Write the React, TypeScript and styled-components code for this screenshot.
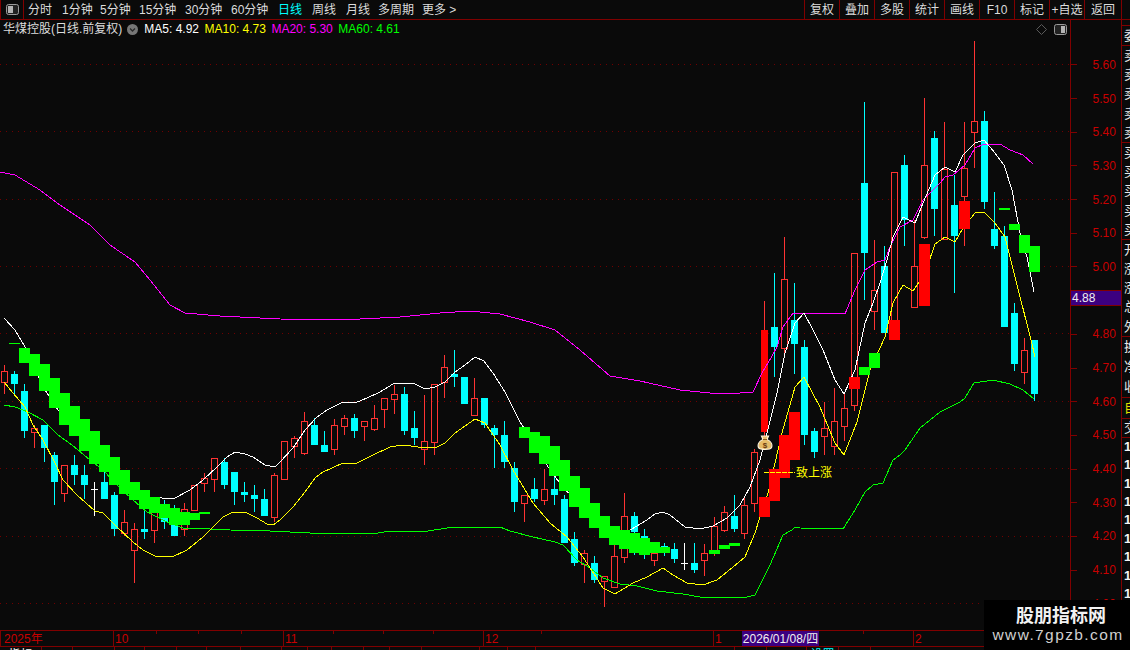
import React from "react";
import styled, { createGlobalStyle } from "styled-components";

const DARK = "#800000";
const AXIS_TEXT = "#c80000";
const SANS = `"Liberation Sans", "Noto Sans CJK SC", sans-serif`;

const Global = createGlobalStyle`
  html, body { margin: 0; padding: 0; background: #0a0a0a; overflow: hidden; }
`;

const Page = styled.div`
  width: 1130px;
  height: 650px;
  position: relative;
  overflow: hidden;
  background: #0a0a0a;
  font: 12px/1 ${SANS};
  color: #dcdcdc;
`;

const TopBar = styled.div`
  height: 20px;
  box-sizing: border-box;
  border-bottom: 1px solid ${DARK};
  display: flex;
  align-items: stretch;
  padding-right: 8px;
`;

const IconCell = styled.div`
  width: 24px;
  box-sizing: border-box;
  border: 1px solid ${DARK};
  border-top: none;
  border-bottom: none;
  display: flex;
  align-items: center;
  justify-content: center;
`;

const Periods = styled.div`
  display: flex;
  align-items: center;
  padding-left: 4px;
`;

const Period = styled.span<{ $active?: boolean; $w: number }>`
  width: ${(p) => p.$w}px;
  color: ${(p) => (p.$active ? "#00ffff" : "#dcdcdc")};
  white-space: nowrap;
`;

const Tools = styled.div`
  margin-left: auto;
  display: flex;
`;

const Tool = styled.div<{ $w?: number; $last?: boolean }>`
  width: ${(p) => p.$w ?? 35}px;
  box-sizing: border-box;
  border-left: 1px solid ${DARK};
  border-right: ${(p) => (p.$last ? `1px solid ${DARK}` : "none")};
  display: flex;
  align-items: center;
  justify-content: center;
  white-space: nowrap;
`;

const MainRow = styled.div`
  display: flex;
  height: 610px;
`;

const ChartColumn = styled.div`
  width: 1070px;
  display: flex;
  flex-direction: column;
`;

const Legend = styled.div`
  height: 18px;
  display: flex;
  align-items: center;
  padding: 0 3px 0 3px;
`;

const Title = styled.span`
  color: #dcdcdc;
  white-space: nowrap;
`;

const Chevron = styled.svg`
  margin: 0 6px 0 5px;
`;

const MaValue = styled.span<{ $c: string }>`
  color: ${(p) => p.$c};
  margin-right: 5.5px;
  white-space: nowrap;
`;

const LegendIcons = styled.div`
  margin-left: auto;
  display: flex;
  align-items: center;
  gap: 7px;
`;

const ChartSvg = styled.svg`
  display: block;
  width: 1070px;
  height: 592px;
`;

const AxisColumn = styled.div`
  width: 51px;
  box-sizing: border-box;
  border-left: 1px solid ${DARK};
  padding-top: 28px;
  position: relative;
`;

const AxisRow = styled.div`
  height: 33.7px;
  display: flex;
  align-items: center;
  color: ${AXIS_TEXT};
`;

const AxisTick = styled.i`
  width: 6px;
  height: 1px;
  background: ${DARK};
  margin-right: 15.5px;
`;

const PriceTag = styled.div`
  position: absolute;
  left: 0;
  right: 0;
  top: 270px;
  height: 16px;
  box-sizing: border-box;
  background: #3c0080;
  border-top: 1px solid ${DARK};
  border-bottom: 1px solid ${DARK};
  color: #f0f0f0;
  display: flex;
  align-items: center;
  padding-left: 1px;
`;

const SideColumn = styled.div`
  flex: 1;
  box-sizing: border-box;
  border-left: 1px solid ${DARK};
  padding-top: 5px;
  overflow: hidden;
`;

const SideGroup = styled.div`
  border-top: 1px solid ${DARK};
`;

const SideRow = styled.div<{ $h?: number; $c?: string }>`
  height: ${(p) => p.$h ?? 19.2}px;
  padding-left: 2px;
  font-size: 13px;
  line-height: ${(p) => p.$h ?? 19.2}px;
  color: ${(p) => p.$c ?? "#e8e8e8"};
  white-space: nowrap;
  overflow: hidden;
`;

const OneRow = styled(SideRow)`
  font-weight: 700;
  color: #f4f4f4;
`;

const DateBar = styled.div`
  height: 16px;
  box-sizing: border-box;
  border-top: 1px solid ${DARK};
  display: flex;
  position: relative;
`;

const DateSegment = styled.div<{ $w: number; $first?: boolean }>`
  width: ${(p) => p.$w}px;
  box-sizing: border-box;
  border-left: 1px solid ${DARK};
  padding-left: ${(p) => (p.$first ? 3 : 1)}px;
  color: ${AXIS_TEXT};
  display: flex;
  align-items: center;
  font-size: 12px;
  white-space: nowrap;
`;

const MinorTick = styled.i<{ $x: number }>`
  position: absolute;
  left: ${(p) => p.$x}px;
  top: 0;
  width: 1px;
  height: 3px;
  background: ${DARK};
`;

const DateCursor = styled.div`
  position: absolute;
  left: 742px;
  top: 0;
  width: 77px;
  height: 15px;
  background: #3c0080;
  color: #f0f0f0;
  display: flex;
  align-items: center;
  justify-content: center;
  white-space: nowrap;
`;

const TabRow = styled.div`
  height: 4px;
  border-top: 1px solid ${DARK};
  display: flex;
  overflow: hidden;
`;

const Tab = styled.div<{ $w: number; $c?: string }>`
  width: ${(p) => p.$w}px;
  flex: none;
  box-sizing: border-box;
  border-right: 1px solid ${DARK};
  color: ${(p) => p.$c ?? "#fff"};
  text-align: center;
  padding-top: 1px;
  line-height: 14px;
`;

const Watermark = styled.div`
  position: absolute;
  right: 0;
  bottom: 0;
  width: 146px;
  height: 50px;
  background: #000;
  display: flex;
  flex-direction: column;
  align-items: center;
  padding-top: 3px;
  box-sizing: border-box;
`;

const WatermarkTitle = styled.div`
  font: 700 18px/22px "Noto Sans CJK SC", sans-serif;
  color: #f2f2f2;
  margin-left: 8px;
`;

const WatermarkUrl = styled.div`
  font: 400 15.5px/20px "Liberation Sans", sans-serif;
  letter-spacing: 1.4px;
  color: #d0d0d0;
  margin-left: 2px;
`;

type C = [string, number, number, number, number];
const candles: C[] = [
  ["r",365,371,382,394],["c",371,374,384,394],["c",384,391,431,438],["r",425,428,432,448],["c",425,425,448,462],
  ["c",452,455,482,505],["r",465,465,493,502],["c",455,465,475,485],["c",465,475,485,499],["w",482,489,489,516],
  ["c",472,482,499,499],["c",492,495,529,536],["r",510,522,533,536],["r",523,529,550,583],["c",509,529,532,539],
  ["r",510,510,530,543],["c",500,515,522,529],["c",505,523,536,536],["r",503,509,529,536],["r",485,485,510,510],
  ["r",473,478,483,492],["r",458,458,479,492],["c",458,462,485,489],["c",472,472,492,505],["c",482,492,495,502],
  ["c",485,495,499,512],["c",489,499,516,516],["r",473,475,517,522],["r",441,441,479,479],["r",436,438,446,458],
  ["r",412,421,453,455],["c",418,425,445,445],["c",431,445,452,452],["r",419,425,449,455],["r",415,418,426,435],
  ["c",414,418,431,438],["r",421,421,426,441],["r",405,418,429,431],["r",398,398,409,428],["r",385,394,399,414],
  ["c",387,394,431,435],["c",411,428,438,445],["r",395,441,449,465],["r",384,384,442,455],["r",355,367,382,398],
  ["c",350,374,377,387],["c",377,377,404,404],["r",378,398,415,415],["c",398,398,425,428],["c",425,428,435,468],
  ["c",421,435,462,468],["c",462,468,502,512],["r",495,495,503,522],["c",478,489,499,502],["r",469,489,500,505],
  ["c",475,489,495,505],["c",495,499,543,543],["c",532,539,563,566],["r",550,553,564,583],["c",556,563,580,583],
  ["r",576,576,581,607],["r",545,556,587,587],["r",493,516,557,563],["c",512,516,532,555],["c",529,536,555,559],
  ["r",542,553,560,566],["c",543,546,553,556],["c",543,549,559,563],["w",543,563,563,570],["c",543,563,570,573],
  ["r",544,553,560,576],["r",517,526,550,556],["r",506,512,530,532],["c",495,516,529,532],["r",496,505,533,539],
  ["r",449,452,503,512],["f",301,330,432,443],["c",273,327,347,377],["r",237,279,348,358],["c",283,320,344,374],
  ["c",340,347,435,445],["c",428,431,452,458],["r",402,428,436,455],["r",388,421,446,455],["r",393,408,426,441],
  ["r",253,253,405,411],["c",102,183,253,300],["r",240,290,311,330],["c",246,266,333,333],["r",172,172,320,340],
  ["c",155,165,220,246],["r",220,266,307,307],["r",98,165,237,239],["c",131,138,209,236],["r",122,169,239,240],
  ["c",175,205,236,293],["r",122,168,196,246],["r",41,121,132,168],["c",111,121,202,209],["c",192,229,246,249],
  ["c",226,236,327,327],["c",303,313,364,371],["r",338,350,372,384],["c",340,340,394,401],
];

type B = [number, number, number, string];
const G = "#00ff00";
const R = "#ff0000";
const blocks: B[] = [
  [1,343,344,G],[2,348,363,G],[3,354,376,G],[4,364,391,G],[5,378,408,G],[6,393,425,G],[7,406,436,G],[8,419,451,G],
  [9,431,464,G],[10,445,472,G],[11,457,485,G],[12,470,494,G],[13,482,500,G],[14,490,509,G],[15,497,513,G],[16,504,518,G],
  [17,508,525,G],[18,512,525,G],[19,513,520,G],[20,512,514,G],
  [52,427,438,G],[53,432,453,G],[54,436,464,G],[55,446,476,G],[56,460,491,G],[57,476,507,G],[58,488,518,G],[59,503,528,G],
  [60,516,538,G],[61,526,545,G],[62,530,549,G],[63,533,553,G],[64,538,555,G],[65,542,553,G],[66,547,553,G],
  [71,550,554,G],[72,545,549,G],[73,543,546,G],
  [76,497,517,R],[77,469,501,R],[78,435,478,R],[79,412,460,R],[85,377,389,R],[86,367,375,G],[87,353,368,G],
  [89,320,340,R],[92,244,306,R],[96,201,229,R],[100,208,210,G],[101,224,230,G],[102,235,253,G],[103,246,272,G],
];

const white = "4,318 15,330 25,347 35,370 45,390 58,410 75,430 95,450 115,470 130,485 150,497 173,499 190,490 203,480 217,467 227,457 235,452 245,454 253,457 265,465 275,467 280,462 293,448 305,430 317,417 327,410 343,402 355,403 367,398 380,392 393,384 403,383 415,384 425,389 435,387 445,382 455,372 465,365 475,357 484,361 493,373 505,392 513,408 520,422 535,445 550,470 565,490 590,510 610,530 630,530 647,520 655,514 663,512 670,515 685,527 700,529 713,526 727,518 740,505 750,487 760,460 767,433 777,393 785,353 795,323 804,313 813,330 823,350 835,380 844,394 855,370 865,323 873,303 880,283 887,260 893,237 903,217 915,223 923,203 935,175 945,167 955,172 963,155 975,143 984,140 995,153 1004,165 1012,190 1020,233 1027,257 1034,292";
const yellow = "4,382 13,393 25,407 33,425 43,440 55,463 63,480 77,495 95,511 103,513 115,525 133,542 143,550 155,556 172,557 187,550 203,537 223,517 233,512 245,512 257,518 267,524 273,525 280,520 293,507 305,492 315,478 323,472 343,463 357,463 373,455 390,447 403,445 418,447 435,448 445,443 455,433 475,419 485,423 500,445 513,470 533,503 550,523 567,537 583,557 603,588 615,594 633,583 647,577 663,568 673,575 687,583 703,585 717,580 733,567 745,557 755,533 760,517 768,493 782,433 795,387 804,377 820,407 835,443 844,455 857,422 870,370 885,337 893,303 903,285 913,291 925,273 935,244 945,237 955,242 963,228 975,213 984,212 995,223 1005,237 1015,277 1031,340 1035,357";
const magenta = "0,172 15,175 40,190 60,205 90,225 110,245 135,262 150,280 170,305 185,313 220,316 280,319 340,320 400,317 440,313 470,311 500,314 530,322 555,330 580,350 610,376 640,381 680,390 710,393 740,393 753,392 762,373 768,363 777,347 783,327 793,313 804,313 845,314 855,290 865,270 877,262 885,260 890,247 900,227 913,220 923,200 940,183 945,177 953,175 965,165 975,148 984,144 1000,144 1010,150 1023,155 1033,164";
const lime = "4,405 15,407 28,412 43,420 58,435 72,445 90,460 103,470 117,485 133,500 147,512 167,522 183,528 210,529 230,530 270,531 310,533 378,533 390,531 428,531 447,528 460,527 500,527 510,531 533,537 555,542 563,545 577,560 590,568 603,578 620,584 637,586 657,591 683,594 700,597 730,597 747,597 755,595 760,585 770,565 783,535 792,530 795,527 800,528 843,529 855,510 865,492 873,485 883,483 893,460 900,455 905,450 920,428 940,412 960,402 965,398 974,383 993,380 1010,384 1023,390 1034,399";

const gridYs = [64, 131, 199, 266, 333, 401, 468, 536, 603];
const CANDLE_RED = "#ff3333";

const Candle = ({ d, i }: { d: C; i: number }) => {
  const [k, hi, top, bot, lo] = d;
  const x0 = 1 + 10 * i;
  const mid = x0 + 3.5;
  if (k === "w") {
    return (
      <g stroke="#fff">
        <line x1={mid} x2={mid} y1={hi} y2={lo} />
        <line x1={x0} x2={x0 + 7} y1={top + 0.5} y2={top + 0.5} />
      </g>
    );
  }
  if (k === "r") {
    return (
      <g stroke={CANDLE_RED}>
        {hi < top && <line x1={mid} x2={mid} y1={hi} y2={top} />}
        <rect x={x0 + 0.5} y={top + 0.5} width={6} height={bot - top} fill="none" />
        {lo > bot && <line x1={mid} x2={mid} y1={bot} y2={lo} />}
      </g>
    );
  }
  const color = k === "f" ? "#ff0000" : "#00ffff";
  return (
    <g>
      <line x1={mid} x2={mid} y1={hi} y2={lo} stroke={k === "f" ? CANDLE_RED : color} />
      <rect x={x0} y={top} width={7} height={bot - top} fill={color} />
    </g>
  );
};

const MoneyBag = () => (
  <g>
    <path d="M761.5 436 L768.5 436 L767 439.5 C771.5 441.5 772.5 445 771.5 447.5 C770.5 450 759.5 450 758.5 447.5 C757.5 445 758.5 441.5 763 439.5 Z" fill="#e6bc68" stroke="#fff4dc" strokeWidth="1.2" />
    <path d="M763 439.5 L767 439.5" stroke="#8a5a20" strokeWidth="1" />
    <text x="765" y="448" textAnchor="middle" fontSize="8" fontFamily="Liberation Sans, sans-serif" fontWeight="700" fill="#6a3a10">$</text>
  </g>
);

const Toggle = ({ side }: { side: "left" | "right" }) => (
  <svg width="13" height="11" viewBox="0 0 13 11">
    <rect x="0.5" y="0.5" width="12" height="10" rx="2" fill="#222" stroke="#9a9a9a" />
    <rect x={side === "left" ? 2 : 7} y="2" width={side === "left" ? 5 : 4} height="7" fill="#b4b4b4" />
  </svg>
);

const periods: [string, number, boolean?][] = [
  ["分时", 34], ["1分钟", 38], ["5分钟", 39], ["15分钟", 46], ["30分钟", 46], ["60分钟", 47],
  ["日线", 34, true], ["周线", 34], ["月线", 32], ["多周期", 44], ["更多 >", 40],
];
const tools = ["复权", "叠加", "多股", "统计", "画线", "F10", "标记", "+自选"];
const prices = ["5.60","5.50","5.40","5.30","5.20","5.10","5.00","4.90","4.80","4.70","4.60","4.50","4.40","4.30","4.20","4.10","4.00"];
const segments: [string, number][] = [["2025年", 113], ["10", 170], ["11", 200], ["12", 230], ["1", 200], ["2", 217]];
const minors = [156, 198, 241, 333, 383, 433, 541, 863];
const tabs: [string, number, string?][] = [
  ["指标", 42], ["+", 31], ["", 42], ["", 30], ["", 32], ["", 30], ["", 34], ["", 41], ["", 26], ["", 24], ["", 32], ["", 26], ["", 32], ["", 58], ["", 28], ["", 28], ["", 199], ["", 32], ["+", 40], ["设置", 32, "#00ffff"], ["", 32],
];

export default function App() {
  return (
    <Page>
      <Global />
      <TopBar>
        <IconCell><Toggle side="left" /></IconCell>
        <Periods>
          {periods.map(([t, w, a]) => <Period key={t} $w={w} $active={a}>{t}</Period>)}
        </Periods>
        <Tools>
          {tools.map((t) => <Tool key={t}>{t}</Tool>)}
          <Tool $w={38} $last>返回</Tool>
        </Tools>
      </TopBar>
      <MainRow>
        <ChartColumn>
          <Legend>
            <Title>华煤控股(日线.前复权)</Title>
            <Chevron width="11" height="11" viewBox="0 0 11 11">
              <circle cx="5.5" cy="5.5" r="5.5" fill="#777" />
              <path d="M3 4.5 L5.5 7 L8 4.5" fill="none" stroke="#2a2a2a" strokeWidth="1.3" />
            </Chevron>
            <MaValue $c="#ffffff">MA5: 4.92</MaValue>
            <MaValue $c="#ffff00">MA10: 4.73</MaValue>
            <MaValue $c="#ff00ff">MA20: 5.30</MaValue>
            <MaValue $c="#00ff00">MA60: 4.61</MaValue>
            <LegendIcons>
              <svg width="11" height="11" viewBox="0 0 11 11">
                <path d="M5.5 0.5 L10.5 5.5 L5.5 10.5 L0.5 5.5 Z" fill="none" stroke="#5a5a5a" />
              </svg>
              <Toggle side="right" />
            </LegendIcons>
          </Legend>
          <ChartSvg viewBox="0 38 1070 592">
            {gridYs.map((y) => (
              <line key={y} x1="0" x2="1070" y1={y + 0.5} y2={y + 0.5} stroke="#700000" strokeDasharray="1 5" />
            ))}
            <g shapeRendering="crispEdges">
              {candles.map((d, i) => <Candle key={i} d={d} i={i} />)}
              <polyline points={lime} fill="none" stroke="#00ff00" />
              <polyline points={magenta} fill="none" stroke="#ff00ff" />
              <polyline points={yellow} fill="none" stroke="#ffff00" />
              <polyline points={white} fill="none" stroke="#ffffff" />
              {blocks.map(([i, t, b, c]) => (
                <rect key={i} x={10 * i - 1} y={t} width={11} height={b - t} fill={c} />
              ))}
              <line x1="764" x2="795" y1="472.5" y2="472.5" stroke="#ffff00" strokeDasharray="5 1" />
            </g>
            <MoneyBag />
            <text x="796" y="477" fontSize="12" fill="#ffff00" fontFamily="Noto Sans CJK SC, sans-serif">致上涨</text>
          </ChartSvg>
        </ChartColumn>
        <AxisColumn>
          {prices.map((p) => (
            <AxisRow key={p}><AxisTick />{p}</AxisRow>
          ))}
          <PriceTag>4.88</PriceTag>
        </AxisColumn>
        <SideColumn>
          <SideGroup><SideRow $h={19}>委</SideRow></SideGroup>
          <SideGroup>{["卖","卖","卖","卖","卖"].map((t, i) => <SideRow key={i}>{t}</SideRow>)}</SideGroup>
          <SideGroup>{["买","买","买","买","买"].map((t, i) => <SideRow key={i}>{t}</SideRow>)}</SideGroup>
          <SideGroup>{["开","涨","涨","总","外"].map((t, i) => <SideRow key={i}>{t}</SideRow>)}</SideGroup>
          <SideGroup>{["换","净","收"].map((t, i) => <SideRow key={i} $h={20}>{t}</SideRow>)}</SideGroup>
          <SideGroup><SideRow $h={20} $c="#e0e000">自</SideRow></SideGroup>
          <SideGroup><SideRow $h={18}>交</SideRow></SideGroup>
          <SideGroup>{Array.from({ length: 10 }, (_, i) => <OneRow key={i} $h={18.4}>1.2</OneRow>)}</SideGroup>
        </SideColumn>
      </MainRow>
      <DateBar>
        {segments.map(([t, w], i) => <DateSegment key={t} $w={w} $first={i === 0}>{t}</DateSegment>)}
        {minors.map((x) => <MinorTick key={x} $x={x} />)}
        <DateCursor>2026/01/08/四</DateCursor>
      </DateBar>
      <TabRow>
        {tabs.map(([t, w, c], i) => <Tab key={i} $w={w} $c={c}>{t}</Tab>)}
      </TabRow>
      <Watermark>
        <WatermarkTitle>股朋指标网</WatermarkTitle>
        <WatermarkUrl>www.7gpzb.com</WatermarkUrl>
      </Watermark>
    </Page>
  );
}
